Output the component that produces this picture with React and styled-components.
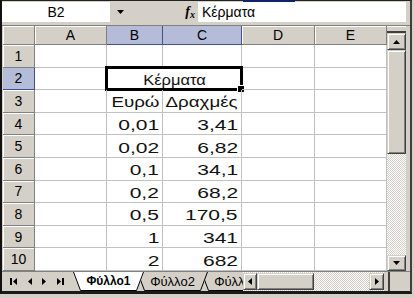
import React from 'react'
import styled, { createGlobalStyle } from 'styled-components'

const FACE = '#d4d0c8'
const SHADOW = '#808080'
const DARK = '#404040'
const GRID = '#c0c0c0'
const SEL = '#b4bcd8'
const SEL_LINE = '#42518c'

const GlobalStyle = createGlobalStyle`
  * { box-sizing: border-box; }
  html, body { margin: 0; padding: 0; background: ${FACE}; }
  body { font-family: "Liberation Sans", Arial, sans-serif; color: #000; }
`

const columns = [
  { key: 'A', sel: false },
  { key: 'B', sel: true },
  { key: 'C', sel: true },
  { key: 'D', sel: false },
  { key: 'E', sel: false },
]

const rows = [
  { n: 1 },
  { n: 2, title: 'Κέρματα' },
  { n: 3, b: 'Ευρώ', c: 'Δραχμές', sx: 1.25 },
  { n: 4, b: '0,01', c: '3,41' },
  { n: 5, b: '0,02', c: '6,82' },
  { n: 6, b: '0,1', c: '34,1' },
  { n: 7, b: '0,2', c: '68,2' },
  { n: 8, b: '0,5', c: '170,5' },
  { n: 9, b: '1', c: '341' },
  { n: 10, b: '2', c: '682' },
]

const sheets = ['Φύλλο1', 'Φύλλο2', 'Φύλλο3']

const Window = styled.div`
  position: relative;
  width: 412px;
  height: 294px;
  display: flex;
  flex-direction: column;
  background: ${FACE};
  border-left: 2px solid #111;
  border-right: 2px solid ${DARK};
  border-top: 1px solid #222;
  border-bottom: 3px solid #1a1a1a;

  &::before {
    content: '';
    position: absolute;
    top: -1px;
    left: 241px;
    width: 52px;
    height: 2px;
    background: #0a246a;
  }
`

const FormulaBar = styled.div`
  height: 25px;
  flex: none;
  display: flex;
  align-items: stretch;
  padding: 1px 4px 3px 0;
  border-bottom: 1px solid ${SHADOW};
`

const NameBox = styled.div`
  width: 108px;
  background: #fff;
  display: flex;
  align-items: center;
  justify-content: center;
  font-size: 14px;
`

const NameArrow = styled.div`
  width: 20px;
  display: flex;
  align-items: center;
  justify-content: center;
`

const FxLabel = styled.div`
  width: 68px;
  display: flex;
  align-items: center;
  justify-content: flex-end;
  padding-right: 3px;
  font-family: "Liberation Serif", serif;
  font-style: italic;
  font-weight: 700;
  font-size: 14px;

  small {
    font-size: 10px;
    margin-top: 4px;
  }
`

const FormulaInput = styled.div`
  flex: 1;
  background: #fff;
  display: flex;
  align-items: center;
  padding-left: 4px;
  font-size: 14px;
`

const Body = styled.div`
  flex: none;
  height: 245px;
  display: flex;
  padding-left: 1px;
`

const Grid = styled.div`
  display: grid;
  grid-template-columns: 32px 72px 56px 79px 73px 72px;
  grid-template-rows: 19px repeat(10, 22.6px);
  background: #fff;
`

const Head = styled.div`
  display: flex;
  align-items: center;
  justify-content: center;
  font-size: 14px;
  background: ${p => (p.$sel ? SEL : FACE)};
  border-right: 1px solid ${p => (p.$sel ? SEL_LINE : SHADOW)};
  border-bottom: 1px solid ${p => (p.$sel ? SEL_LINE : SHADOW)};
  box-shadow: ${p => (p.$sel ? 'none' : 'inset 1px 1px 0 #fff')};
`

const Cell = styled.div`
  position: relative;
  grid-column: span ${p => p.$span || 1};
  display: flex;
  align-items: center;
  justify-content: ${p => (p.$center ? 'center' : 'flex-end')};
  padding: 2px 3px 0;
  border-right: 1px solid ${GRID};
  border-bottom: 1px solid ${GRID};
  font-size: 15px;
  line-height: 1;
  color: #111;
  white-space: nowrap;
`

const CellText = styled.span`
  display: inline-block;
  transform: scaleX(${p => p.$sx});
  transform-origin: ${p => (p.$center ? 'center' : 'right')} center;
`

const Selection = styled.div`
  position: absolute;
  top: -2px;
  left: -2px;
  right: -2px;
  bottom: -2px;
  border: 3px solid #000;
  pointer-events: none;

  &::after {
    content: '';
    position: absolute;
    right: -5px;
    bottom: -5px;
    width: 6px;
    height: 6px;
    background: #000;
    border: 1px solid #fff;
  }
`

const VScroll = styled.div`
  width: 19px;
  display: flex;
  flex-direction: column;
  background: repeating-conic-gradient(${FACE} 0 25%, #fff 0 50%) 0 0 / 2px 2px;
`

const SplitBox = styled.div`
  height: 7px;
  flex: none;
  background: ${FACE};
  border-top: 1px solid #fff;
  border-bottom: 2px solid ${DARK};
`

const Button3D = styled.div`
  flex: none;
  display: flex;
  align-items: center;
  justify-content: center;
  background: ${FACE};
  border: 1px solid;
  border-color: ${FACE} ${DARK} ${DARK} ${FACE};
  box-shadow: inset 1px 1px 0 #fff, inset -1px -1px 0 ${SHADOW};
  width: ${p => (p.$w ? `${p.$w}px` : 'auto')};
  height: ${p => (p.$h ? `${p.$h}px` : 'auto')};
`

const Track = styled.div`
  flex: 1;
`

const BottomBar = styled.div`
  flex: none;
  height: 20px;
  display: flex;
  align-items: stretch;
  padding-left: 1px;
  border-top: 1px solid ${SHADOW};
`

const TabNav = styled.div`
  width: 68px;
  display: flex;
  align-items: center;
  justify-content: space-around;
  padding: 0 2px;
`

const Tabs = styled.div`
  width: 172px;
  display: flex;
  overflow: hidden;
  padding-left: 2px;
`

const Tab = styled.div`
  position: relative;
  flex: none;
  width: 71px;
  height: 19px;
  margin-left: ${p => (p.$first ? '0' : '-7px')};
  z-index: ${p => p.$z};
  display: flex;
  align-items: center;
  justify-content: center;
  padding-bottom: 1px;
  font-size: ${p => (p.$active ? '12px' : '13px')};
  font-weight: ${p => (p.$active ? 700 : 400)};

  svg {
    position: absolute;
    inset: 0;
  }

  span {
    position: relative;
  }
`

const HScroll = styled.div`
  width: 141px;
  display: flex;
  padding: 1px 0;
  background: repeating-conic-gradient(${FACE} 0 25%, #fff 0 50%) 0 0 / 2px 2px;
`

const Corner = styled.div`
  flex: 1;
  margin-left: 4px;
  border-left: 2px solid ${DARK};
`

const Tri = ({ dir, bar }) => {
  const pts = {
    up: '0,4 3.5,0 7,4',
    down: '0,0 7,0 3.5,4',
    left: '4,0 4,7 0,3.5',
    right: '0,0 0,7 4,3.5',
  }[dir]
  const vertical = dir === 'up' || dir === 'down'
  const w = vertical ? 7 : bar ? 7 : 4
  const h = vertical ? 4 : 7
  let shift = 0
  if (bar && dir === 'left') shift = 3
  return (
    <svg width={w} height={h} viewBox={`0 0 ${w} ${h}`}>
      <g transform={`translate(${shift},0)`}>
        <polygon points={pts} fill="#000" />
      </g>
      {bar && dir === 'left' && <rect x="0" y="0" width="2" height="7" fill="#000" />}
      {bar && dir === 'right' && <rect x="5" y="0" width="2" height="7" fill="#000" />}
    </svg>
  )
}

const TabShape = ({ active }) => (
  <svg width="71" height="19" viewBox="0 0 71 19">
    <polygon points="0,0 7,18 64,18 71,0" fill={active ? '#fff' : FACE} />
    <polyline points="0.5,0 7.5,18.5 63.5,18.5 70.5,0" fill="none" stroke="#000" strokeWidth="1" />
  </svg>
)

export default function App() {
  return (
    <>
      <GlobalStyle />
      <Window>
        <FormulaBar>
          <NameBox>B2</NameBox>
          <NameArrow><Tri dir="down" /></NameArrow>
          <FxLabel>f<small>x</small></FxLabel>
          <FormulaInput>Κέρματα</FormulaInput>
        </FormulaBar>

        <Body>
          <Grid>
            <Head />
            {columns.map(col => (
              <Head key={col.key} $sel={col.sel}>{col.key}</Head>
            ))}
            {rows.map(row => (
              <React.Fragment key={row.n}>
                <Head $sel={row.n === 2}>{row.n}</Head>
                <Cell />
                {row.title ? (
                  <Cell $span={2} $center>
                    <CellText $sx={1.1} $center>{row.title}</CellText>
                    <Selection />
                  </Cell>
                ) : (
                  <>
                    <Cell><CellText $sx={row.sx || 1.4}>{row.b}</CellText></Cell>
                    <Cell><CellText $sx={row.sx || 1.4}>{row.c}</CellText></Cell>
                  </>
                )}
                <Cell />
                <Cell />
              </React.Fragment>
            ))}
          </Grid>
          <VScroll>
            <SplitBox />
            <Button3D $h={17}><Tri dir="up" /></Button3D>
            <Button3D $h={104} />
            <Track />
            <Button3D $h={16}><Tri dir="down" /></Button3D>
          </VScroll>
        </Body>

        <BottomBar>
          <TabNav>
            <Tri dir="left" bar />
            <Tri dir="left" />
            <Tri dir="right" />
            <Tri dir="right" bar />
          </TabNav>
          <Tabs>
            {sheets.map((name, i) => (
              <Tab key={name} $first={i === 0} $active={i === 0} $z={10 - i}>
                <TabShape active={i === 0} />
                <span>{name}</span>
              </Tab>
            ))}
          </Tabs>
          <HScroll>
            <Button3D $w={14}><Tri dir="left" /></Button3D>
            <Button3D $w={57} />
            <Track />
            <Button3D $w={15}><Tri dir="right" /></Button3D>
          </HScroll>
          <Corner />
        </BottomBar>
      </Window>
    </>
  )
}
